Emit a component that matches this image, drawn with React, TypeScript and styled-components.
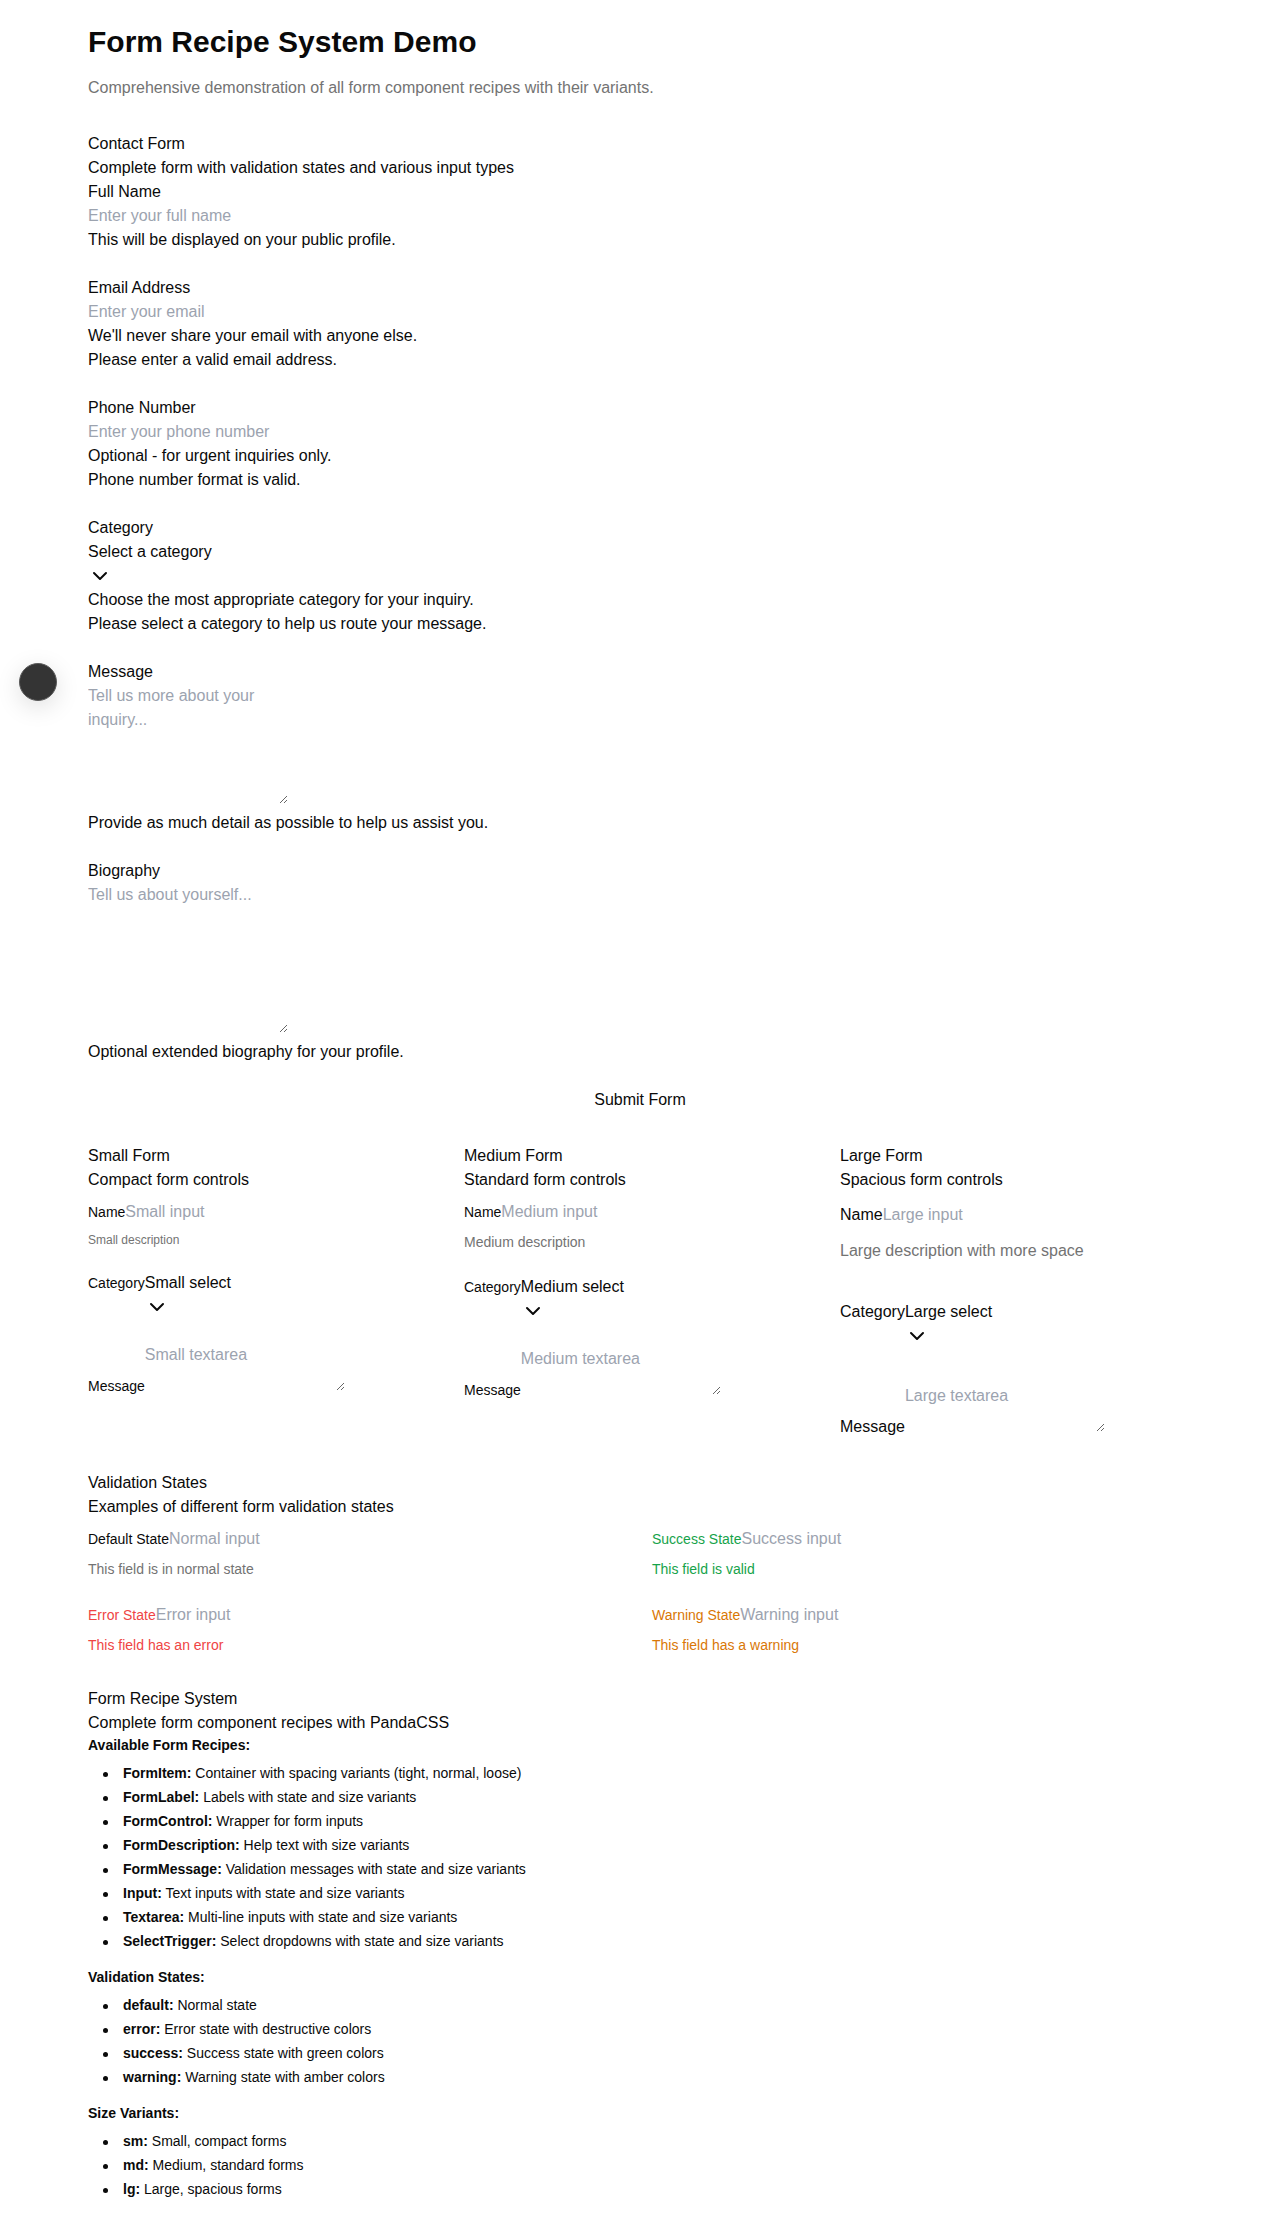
import React from "react";
import styled, { createGlobalStyle } from "styled-components";
import { ChevronDown } from "lucide-react";

type Size = "sm" | "md" | "lg";
type Tone = "default" | "success" | "error" | "warning";

const GlobalStyle = createGlobalStyle`
  *, *::before, *::after { box-sizing: border-box; }
  html, body { margin: 0; padding: 0; background: #ffffff; }
  body {
    font-family: "Liberation Sans", Arial, Helvetica, sans-serif;
    font-size: 16px;
    line-height: 24px;
    color: #0a0a0a;
  }
  h1, h2, h3, h4, p, ul { margin: 0; }
  input::placeholder, textarea::placeholder { color: #9ca3af; opacity: 1; }
`;

const toneColor: Record<Tone, string> = {
  default: "#0a0a0a",
  success: "#16a34a",
  error: "#ef4444",
  warning: "#d97706",
};

const msgColor: Record<Tone, string> = {
  default: "#737373",
  success: "#16a34a",
  error: "#ef4444",
  warning: "#d97706",
};

const labelSize: Record<Size, number> = { sm: 14, md: 14, lg: 16 };
const descFont: Record<Size, { size: number; lh: number }> = {
  sm: { size: 12, lh: 16 },
  md: { size: 14, lh: 20 },
  lg: { size: 16, lh: 24 },
};
const formTop: Record<Size, number> = { sm: 8, md: 8, lg: 11 };
const descGap: Record<Size, number> = { sm: 8, md: 8, lg: 12 };
const selectGap: Record<Size, number> = { sm: 23, md: 23, lg: 37 };
const areaGap: Record<Size, number> = { sm: 24, md: 24, lg: 36 };

const Page = styled.main`
  max-width: 1152px;
  margin: 0 auto;
  padding: 24px;
  display: flex;
  flex-direction: column;
`;

const Title = styled.h1`
  font-size: 30px;
  line-height: 36px;
  font-weight: 700;
  margin-bottom: 16px;
`;

const Lead = styled.p`
  color: #737373;
  margin-bottom: 32px;
`;

const Sections = styled.div`
  display: flex;
  flex-direction: column;
  gap: 32px;
`;

const Card = styled.section`
  display: flex;
  flex-direction: column;
`;

const CardTitle = styled.h3`
  font-size: 16px;
  line-height: 24px;
  font-weight: 400;
`;

const CardText = styled.p`
  font-size: 16px;
  line-height: 24px;
`;

const ContactForm = styled.form`
  display: flex;
  flex-direction: column;
  gap: 24px;
`;

const Field = styled.div`
  display: flex;
  flex-direction: column;
  align-items: stretch;
`;

const BlockLabel = styled.label`
  display: block;
`;

const Line = styled.div<{ $top?: number }>`
  display: block;
  margin-top: ${(p) => p.$top || 0}px;
`;

const InlineLabel = styled.label<{ $size: number; $tone?: Tone }>`
  font-size: ${(p) => p.$size}px;
  line-height: ${(p) => (p.$size === 16 ? 24 : 20)}px;
  color: ${(p) => toneColor[p.$tone || "default"]};
`;

const TextInput = styled.input`
  font: inherit;
  font-size: 16px;
  line-height: 24px;
  height: 24px;
  width: 200px;
  padding: 0;
  border: 0;
  margin: 0;
  background: transparent;
  color: inherit;
  outline: none;
  vertical-align: baseline;
`;

const Trigger = styled.button`
  display: inline-block;
  font: inherit;
  font-size: 16px;
  line-height: 24px;
  padding: 0;
  margin: 0;
  border: 0;
  background: transparent;
  color: inherit;
  text-align: center;
  vertical-align: baseline;
  cursor: pointer;
  svg { display: block; }
`;

const Area = styled.textarea<{ $h: number }>`
  display: inline-block;
  font: inherit;
  font-size: 16px;
  line-height: 24px;
  width: 200px;
  height: ${(p) => p.$h}px;
  padding: 0;
  margin: 0;
  border: 0;
  background: transparent;
  color: inherit;
  outline: none;
  resize: vertical;
  vertical-align: baseline;
`;

const Help = styled.p``;

const SubmitButton = styled.button`
  display: block;
  width: 100%;
  font: inherit;
  font-size: 16px;
  line-height: 24px;
  padding: 0;
  margin: 0;
  border: 0;
  background: transparent;
  color: inherit;
  text-align: center;
  cursor: pointer;
`;

const SizeGrid = styled.div`
  display: grid;
  grid-template-columns: repeat(3, minmax(0, 1fr));
  gap: 24px;
  align-items: start;
`;

const SizeForm = styled.div<{ $size: Size }>`
  display: flex;
  flex-direction: column;
  padding-top: ${(p) => formTop[p.$size]}px;
`;

const SizeDesc = styled.p<{ $size: Size }>`
  font-size: ${(p) => descFont[p.$size].size}px;
  line-height: ${(p) => descFont[p.$size].lh}px;
  color: #737373;
  margin-top: ${(p) => descGap[p.$size]}px;
`;

const StateGrid = styled.div`
  display: grid;
  grid-template-columns: repeat(2, minmax(0, 1fr));
  column-gap: 24px;
  row-gap: 24px;
  margin-top: 8px;
`;

const StateMsg = styled.p<{ $tone: Tone }>`
  font-size: 14px;
  line-height: 20px;
  margin-top: 8px;
  color: ${(p) => msgColor[p.$tone]};
`;

const InfoHeading = styled.h4<{ $top?: number }>`
  font-size: 14px;
  line-height: 20px;
  font-weight: 700;
  margin-top: ${(p) => p.$top || 0}px;
`;

const List = styled.ul`
  list-style: none;
  margin: 8px 0 0;
  padding: 0 0 0 15px;
  display: flex;
  flex-direction: column;
  gap: 4px;
`;

const ListItem = styled.li`
  font-size: 14px;
  line-height: 20px;
  &::before {
    content: "";
    display: inline-block;
    width: 5px;
    height: 5px;
    border-radius: 50%;
    background: currentColor;
    vertical-align: middle;
    margin-right: 15px;
  }
  strong { font-weight: 700; }
`;

const FloatingDot = styled.div`
  position: fixed;
  left: 19px;
  top: 663px;
  width: 38px;
  height: 38px;
  border-radius: 50%;
  background: #343434;
  border: 1.5px solid #5a5a5a;
  box-shadow: 0 6px 24px rgba(0, 0, 0, 0.13);
`;

const sizeCols: { size: Size; title: string; text: string; input: string; desc: string; select: string; area: string }[] = [
  { size: "sm", title: "Small Form", text: "Compact form controls", input: "Small input", desc: "Small description", select: "Small select", area: "Small textarea" },
  { size: "md", title: "Medium Form", text: "Standard form controls", input: "Medium input", desc: "Medium description", select: "Medium select", area: "Medium textarea" },
  { size: "lg", title: "Large Form", text: "Spacious form controls", input: "Large input", desc: "Large description with more space", select: "Large select", area: "Large textarea" },
];

const states: { tone: Tone; label: string; input: string; msg: string }[] = [
  { tone: "default", label: "Default State", input: "Normal input", msg: "This field is in normal state" },
  { tone: "success", label: "Success State", input: "Success input", msg: "This field is valid" },
  { tone: "error", label: "Error State", input: "Error input", msg: "This field has an error" },
  { tone: "warning", label: "Warning State", input: "Warning input", msg: "This field has a warning" },
];

const recipes: [string, string][] = [
  ["FormItem:", "Container with spacing variants (tight, normal, loose)"],
  ["FormLabel:", "Labels with state and size variants"],
  ["FormControl:", "Wrapper for form inputs"],
  ["FormDescription:", "Help text with size variants"],
  ["FormMessage:", "Validation messages with state and size variants"],
  ["Input:", "Text inputs with state and size variants"],
  ["Textarea:", "Multi-line inputs with state and size variants"],
  ["SelectTrigger:", "Select dropdowns with state and size variants"],
];

const validation: [string, string][] = [
  ["default:", "Normal state"],
  ["error:", "Error state with destructive colors"],
  ["success:", "Success state with green colors"],
  ["warning:", "Warning state with amber colors"],
];

const sizes: [string, string][] = [
  ["sm:", "Small, compact forms"],
  ["md:", "Medium, standard forms"],
  ["lg:", "Large, spacious forms"],
];

function Bullets({ items }: { items: [string, string][] }) {
  return (
    <List>
      {items.map(([k, v]) => (
        <ListItem key={k}>
          <strong>{k}</strong> {v}
        </ListItem>
      ))}
    </List>
  );
}

export default function App() {
  return (
    <>
      <GlobalStyle />
      <FloatingDot />
      <Page>
        <Title>Form Recipe System Demo</Title>
        <Lead>Comprehensive demonstration of all form component recipes with their variants.</Lead>
        <Sections>
          <Card>
            <CardTitle>Contact Form</CardTitle>
            <CardText>Complete form with validation states and various input types</CardText>
            <ContactForm onSubmit={(e) => e.preventDefault()}>
              <Field>
                <BlockLabel>Full Name</BlockLabel>
                <Line><TextInput placeholder="Enter your full name" /></Line>
                <Help>This will be displayed on your public profile.</Help>
              </Field>
              <Field>
                <BlockLabel>Email Address</BlockLabel>
                <Line><TextInput placeholder="Enter your email" /></Line>
                <Help>We'll never share your email with anyone else.</Help>
                <Help>Please enter a valid email address.</Help>
              </Field>
              <Field>
                <BlockLabel>Phone Number</BlockLabel>
                <Line><TextInput placeholder="Enter your phone number" /></Line>
                <Help>Optional - for urgent inquiries only.</Help>
                <Help>Phone number format is valid.</Help>
              </Field>
              <Field>
                <BlockLabel>Category</BlockLabel>
                <Line>
                  <Trigger type="button">
                    Select a category
                    <ChevronDown size={24} strokeWidth={2} />
                  </Trigger>
                </Line>
                <Help>Choose the most appropriate category for your inquiry.</Help>
                <Help>Please select a category to help us route your message.</Help>
              </Field>
              <Field>
                <BlockLabel>Message</BlockLabel>
                <Line><Area $h={120} placeholder="Tell us more about your inquiry..." /></Line>
                <Help>Provide as much detail as possible to help us assist you.</Help>
              </Field>
              <Field>
                <BlockLabel>Biography</BlockLabel>
                <Line><Area $h={150} placeholder="Tell us about yourself..." /></Line>
                <Help>Optional extended biography for your profile.</Help>
              </Field>
              <SubmitButton type="submit">Submit Form</SubmitButton>
            </ContactForm>
          </Card>

          <SizeGrid>
            {sizeCols.map((c) => (
              <Card key={c.size}>
                <CardTitle>{c.title}</CardTitle>
                <CardText>{c.text}</CardText>
                <SizeForm $size={c.size}>
                  <div>
                    <Line>
                      <InlineLabel $size={labelSize[c.size]}>Name</InlineLabel>
                      <TextInput placeholder={c.input} />
                    </Line>
                    <SizeDesc $size={c.size}>{c.desc}</SizeDesc>
                  </div>
                  <Line $top={selectGap[c.size]}>
                    <InlineLabel $size={labelSize[c.size]}>Category</InlineLabel>
                    <Trigger type="button">
                      {c.select}
                      <ChevronDown size={24} strokeWidth={2} />
                    </Trigger>
                  </Line>
                  <Line $top={areaGap[c.size]}>
                    <InlineLabel $size={labelSize[c.size]}>Message</InlineLabel>
                    <Area $h={48} placeholder={c.area} />
                  </Line>
                </SizeForm>
              </Card>
            ))}
          </SizeGrid>

          <Card>
            <CardTitle>Validation States</CardTitle>
            <CardText>Examples of different form validation states</CardText>
            <StateGrid>
              {states.map((s) => (
                <div key={s.tone}>
                  <Line>
                    <InlineLabel $size={14} $tone={s.tone}>{s.label}</InlineLabel>
                    <TextInput placeholder={s.input} />
                  </Line>
                  <StateMsg $tone={s.tone}>{s.msg}</StateMsg>
                </div>
              ))}
            </StateGrid>
          </Card>

          <Card>
            <CardTitle>Form Recipe System</CardTitle>
            <CardText>Complete form component recipes with PandaCSS</CardText>
            <InfoHeading>Available Form Recipes:</InfoHeading>
            <Bullets items={recipes} />
            <InfoHeading $top={16}>Validation States:</InfoHeading>
            <Bullets items={validation} />
            <InfoHeading $top={16}>Size Variants:</InfoHeading>
            <Bullets items={sizes} />
          </Card>
        </Sections>
      </Page>
    </>
  );
}
